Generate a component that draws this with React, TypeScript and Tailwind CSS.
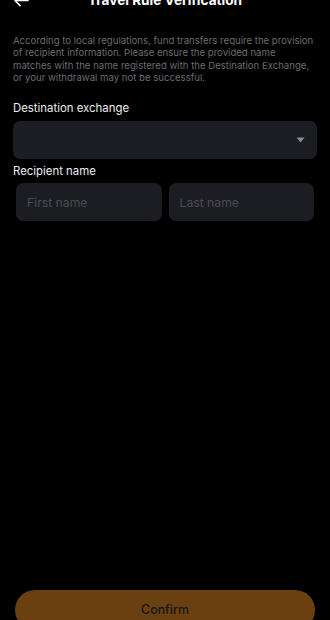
import React from "react";

const TravelRuleVerification = () => {
  return (
    <div
      className="w-[330px] h-[620px] bg-black text-white overflow-hidden flex flex-col"
      style={{ fontFamily: "Inter, 'Noto Sans', sans-serif" }}
    >
      {/* header, scrolled up half out of view */}
      <div className="relative h-[24px] -mt-[12px] flex items-center justify-center shrink-0">
        <button className="absolute left-[13px] top-0 h-[24px] w-[18px] flex items-center text-white">
          <svg width="16" height="13" viewBox="0 0 17 14" fill="none">
            <path
              d="M16 7H2M7.5 1.5L2 7l5.5 5.5"
              stroke="currentColor"
              strokeWidth="1.6"
              strokeLinecap="round"
              strokeLinejoin="round"
            />
          </svg>
        </button>
        <h1 className="text-[13.6px] font-bold leading-[20px]">
          Travel Rule Verification
        </h1>
      </div>

      <p className="mt-[23px] px-[13px] text-[9.6px] leading-[12.3px] text-[#6c6c6e] whitespace-nowrap">
        According to local regulations, fund transfers require the provision
        <br />
        of recipient information. Please ensure the provided name
        <br />
        matches with the name registered with the Destination Exchange,
        <br />
        or your withdrawal may not be successful.
      </p>

      <label className="mt-[16px] px-[13px] text-[11.4px] leading-[16px] text-[#ececec]">
        Destination exchange
      </label>
      <div className="mx-[13px] mt-[5px] h-[38px] rounded-[7px] bg-[#1c1d22] flex items-center justify-end pr-[12px]">
        <svg width="9" height="6" viewBox="0 0 9 6">
          <path d="M0.5 0.5h8L4.5 5.5z" fill="#8c8d92" />
        </svg>
      </div>

      <label className="mt-[4px] px-[13px] text-[11.4px] leading-[16px] text-[#ececec]">
        Recipient name
      </label>
      <div className="mx-[16px] mt-[4px] grid grid-cols-2 gap-[7px]">
        <input
          placeholder="First name"
          className="h-[38px] rounded-[7px] bg-[#1c1d22] px-[11px] text-[12.2px] text-white placeholder:text-[#4b4c51] outline-none"
        />
        <input
          placeholder="Last name"
          className="h-[38px] rounded-[7px] bg-[#1c1d22] px-[11px] text-[12.2px] text-white placeholder:text-[#4b4c51] outline-none"
        />
      </div>

      <div className="mt-auto px-[15px] -mb-[10px] shrink-0">
        <button className="w-full h-[40px] rounded-full bg-[#6a4010] text-[12.4px] font-medium text-[#161616]">
          Confirm
        </button>
      </div>
    </div>
  );
};

export default function App() {
  return <TravelRuleVerification />;
}
